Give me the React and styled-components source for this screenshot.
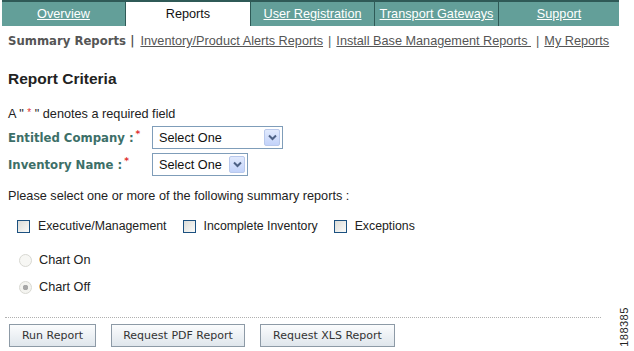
import React from "react";
import styled, { createGlobalStyle } from "styled-components";

const GlobalStyle = createGlobalStyle`
  body {
    margin: 0;
    background: #fff;
    font-family: "Liberation Sans", Arial, sans-serif;
    font-size: 12.7px;
    color: #222;
  }
`;

const tabs = [
  { label: "Overview" },
  { label: "Reports", active: true },
  { label: "User Registration" },
  { label: "Transport Gateways" },
  { label: "Support" },
];

const subLinks = [
  "Inventory/Product Alerts Reports",
  "Install Base Management Reports ",
  "My Reports",
];

const reports = ["Executive/Management", "Incomplete Inventory", "Exceptions"];

const App = () => {
  return (
    <Page>
      <GlobalStyle />
      <TabBar>
        {tabs.map((t) => (
          <Tab key={t.label} $active={t.active}>
            {t.active ? t.label : <TabLink href="#">{t.label}</TabLink>}
          </Tab>
        ))}
      </TabBar>

      <SubNav>
        <SubCurrent>Summary Reports |</SubCurrent>
        {subLinks.map((l, i) => (
          <React.Fragment key={l}>
            <SubLink href="#">{l}</SubLink>
            {i < subLinks.length - 1 && <Pipe>|</Pipe>}
          </React.Fragment>
        ))}
      </SubNav>

      <Heading>Report Criteria</Heading>

      <Note>
        A " <Star>*</Star> " denotes a required field
      </Note>

      <FieldRow $top={5}>
        <Label>
          Entitled Company :<Req>*</Req>
        </Label>
        <Select $width={131}>
          <span>Select One</span>
          <Arrow />
        </Select>
      </FieldRow>
      <FieldRow $top={4}>
        <Label>
          Inventory Name :<Req>*</Req>
        </Label>
        <Select $width={96}>
          <span>Select One</span>
          <Arrow />
        </Select>
      </FieldRow>

      <Prompt>Please select one or more of the following summary reports :</Prompt>

      <CheckRow>
        {reports.map((r) => (
          <Check key={r}>
            <Box />
            {r}
          </Check>
        ))}
      </CheckRow>

      <RadioRow>
        <Radio />
        Chart On
      </RadioRow>
      <RadioRow $top={13}>
        <Radio $checked />
        Chart Off
      </RadioRow>

      <Dotted />

      <Buttons>
        <Button $width={87}>Run Report</Button>
        <Button $width={134}>Request PDF Report</Button>
        <Button $width={135}>Request XLS Report</Button>
      </Buttons>

      <FigNum>188385</FigNum>
    </Page>
  );
};

const Arrow = () => (
  <ArrowBox>
    <svg width="9" height="7" viewBox="0 0 9 7">
      <path d="M1 1.5 L4.5 5 L8 1.5" fill="none" stroke="#4d6185" strokeWidth="2" />
    </svg>
  </ArrowBox>
);

export default App;

const Page = styled.div`
  position: relative;
  width: 634px;
  height: 351px;
  overflow: hidden;
`;

const TabBar = styled.div`
  display: flex;
  width: 617px;
  height: 26px;
  margin-left: 2px;
  border-top: 2px solid #2f5a57;
  background: #2f5a57;
  gap: 1px;
  box-sizing: border-box;
`;

const Tab = styled.div`
  flex: 0 0 auto;
  width: ${(p) => (p.$active ? "124px" : "123px")};
  &:last-child {
    flex: 1;
  }
  display: flex;
  align-items: center;
  justify-content: center;
  background: ${(p) => (p.$active ? "#fff" : "#639f99")};
  color: #111;
  font-size: 12.7px;
`;

const TabLink = styled.a`
  color: #fff;
  text-decoration: underline;
`;

const SubNav = styled.div`
  display: flex;
  align-items: center;
  gap: 5px;
  padding: 8px 0 0 8px;
  height: 14px;
  color: #555;
`;

const SubCurrent = styled.span`
  font-weight: bold;
  color: #555;
  font-family: "DejaVu Sans", Verdana, sans-serif;
  font-size: 11.7px;
  margin-right: 1px;
`;

const SubLink = styled.a`
  color: #555;
  text-decoration: underline;
  white-space: pre;
`;

const Pipe = styled.span`
  color: #555;
`;

const Heading = styled.h1`
  margin: 23px 0 0 8px;
  font-size: 15.5px;
  font-weight: bold;
  color: #222;
  line-height: 16px;
`;

const Note = styled.div`
  margin: 19px 0 0 8px;
  line-height: 14px;
`;

const Star = styled.span`
  color: #e03030;
  font-size: 10px;
  vertical-align: 2px;
`;

const FieldRow = styled.div`
  display: flex;
  align-items: center;
  margin: ${(p) => p.$top ?? 4}px 0 0 8px;
`;

const Label = styled.div`
  width: 144px;
  font-family: "DejaVu Sans", Verdana, sans-serif;
  font-weight: bold;
  font-size: 11.7px;
  color: #3d6f68;
`;

const Req = styled.sup`
  color: #e03030;
  font-size: 9px;
  margin-left: 2px;
  vertical-align: 5px;
  line-height: 0;
`;

const Select = styled.div`
  box-sizing: border-box;
  width: ${(p) => p.$width}px;
  height: 23px;
  border: 1px solid #7f9db9;
  background: #fff;
  display: flex;
  align-items: center;
  justify-content: space-between;
  padding: 0 2px 0 6px;
  color: #111;
`;

const ArrowBox = styled.div`
  width: 16px;
  height: 17px;
  box-sizing: border-box;
  border: 1px solid #b9c9ec;
  border-radius: 2px;
  background: linear-gradient(#e1eafd, #c3d3fa);
  display: flex;
  align-items: center;
  justify-content: center;
`;

const Prompt = styled.div`
  margin: 13px 0 0 8px;
  line-height: 14px;
`;

const CheckRow = styled.div`
  display: flex;
  gap: 16px;
  margin: 16px 0 0 17px;
`;

const Check = styled.label`
  display: flex;
  align-items: center;
  gap: 8px;
  font-size: 12.3px;
`;

const Box = styled.span`
  width: 13px;
  height: 13px;
  box-sizing: border-box;
  border: 1px solid #1c5180;
  background: linear-gradient(135deg, #dcdcd7, #fbfbf9);
`;

const RadioRow = styled.label`
  display: flex;
  align-items: center;
  gap: 7px;
  margin: ${(p) => p.$top ?? 20}px 0 0 19px;
  line-height: 14px;
`;

const Radio = styled.span`
  width: 13px;
  height: 13px;
  box-sizing: border-box;
  border-radius: 50%;
  border: 1px solid #d8d8d2;
  background: ${(p) =>
    p.$checked
      ? "radial-gradient(circle, #a8a8a8 0 2.5px, #f4f4f0 3px)"
      : "#f7f7f4"};
`;

const Dotted = styled.div`
  margin: 23px 0 0 5px;
  width: 596px;
  border-top: 1px dotted #b0b0b0;
`;

const Buttons = styled.div`
  display: flex;
  gap: 15px;
  margin: 6px 0 0 9px;
`;

const Button = styled.button`
  box-sizing: border-box;
  width: ${(p) => p.$width}px;
  height: 23px;
  border: 1px solid #8d9aa6;
  background: linear-gradient(#fbfcfd, #dfe6ec);
  font-family: "DejaVu Sans", Verdana, sans-serif;
  font-size: 11px;
  color: #333;
  padding: 0;
`;

const FigNum = styled.div`
  position: absolute;
  left: 604px;
  top: 321px;
  transform: rotate(-90deg);
  font-family: "Liberation Sans", Arial, sans-serif;
  font-size: 11px;
  color: #222;
  letter-spacing: 0.5px;
`;
